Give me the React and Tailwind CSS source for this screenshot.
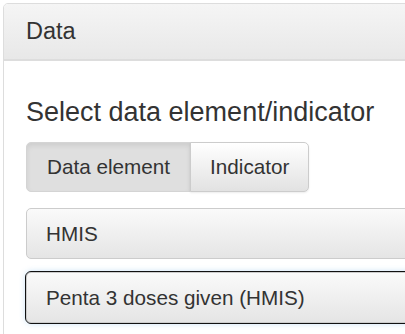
import React from "react";

const font = { fontFamily: '"Liberation Sans", Arial, sans-serif' };

export default function App() {
	return (
		<div className="w-[405px] h-[334px] overflow-hidden bg-white pt-[3px] pl-[3px] text-[#333]" style={font}>
			<div className="w-[520px] h-[340px] border border-[#dddddd] rounded-tl-[5px] bg-white">
				<div className="h-[57px] flex items-center pl-[22px] rounded-tl-[4px] border-b-2 border-[#dddddd] bg-gradient-to-b from-[#f5f5f5] to-[#e8e8e8]">
					<span className="text-[23.5px] leading-none">Data</span>
				</div>

				<div className="pt-[36px] pl-[22px]">
					<h4 className="text-[27px] leading-[30px] mb-[15px]">Select data element/indicator</h4>

					<div className="flex h-[50px]">
						<div className="flex items-center px-[20px] text-[20.7px] rounded-l-[5px] border border-[#d4d4d4] bg-[#dfdfdf] shadow-[inset_0_3px_5px_rgba(0,0,0,0.08)]">Data element</div>
						<div className="flex items-center px-[19px] text-[20.7px] rounded-r-[5px] border border-[#cccccc] -ml-px bg-gradient-to-b from-white to-[#e2e2e2] shadow-[0_1px_2px_rgba(0,0,0,0.08)]">Indicator</div>
					</div>

					<div className="mt-[16px] h-[51px] flex items-center pl-[19px] text-[20.7px] rounded-[5px] border border-[#cccccc] bg-gradient-to-b from-[#fafafa] to-[#e5e5e5]">HMIS</div>

					<div className="mt-[13px] h-[51px] flex items-center pl-[19px] text-[20.7px] rounded-[5px] border border-[#cccccc] outline outline-1 outline-[#111] bg-gradient-to-b from-[#fafafa] to-[#e5e5e5] shadow-[0_0_6px_rgba(102,175,233,0.45)]">Penta 3 doses given (HMIS)</div>
				</div>
			</div>
		</div>
	);
}
